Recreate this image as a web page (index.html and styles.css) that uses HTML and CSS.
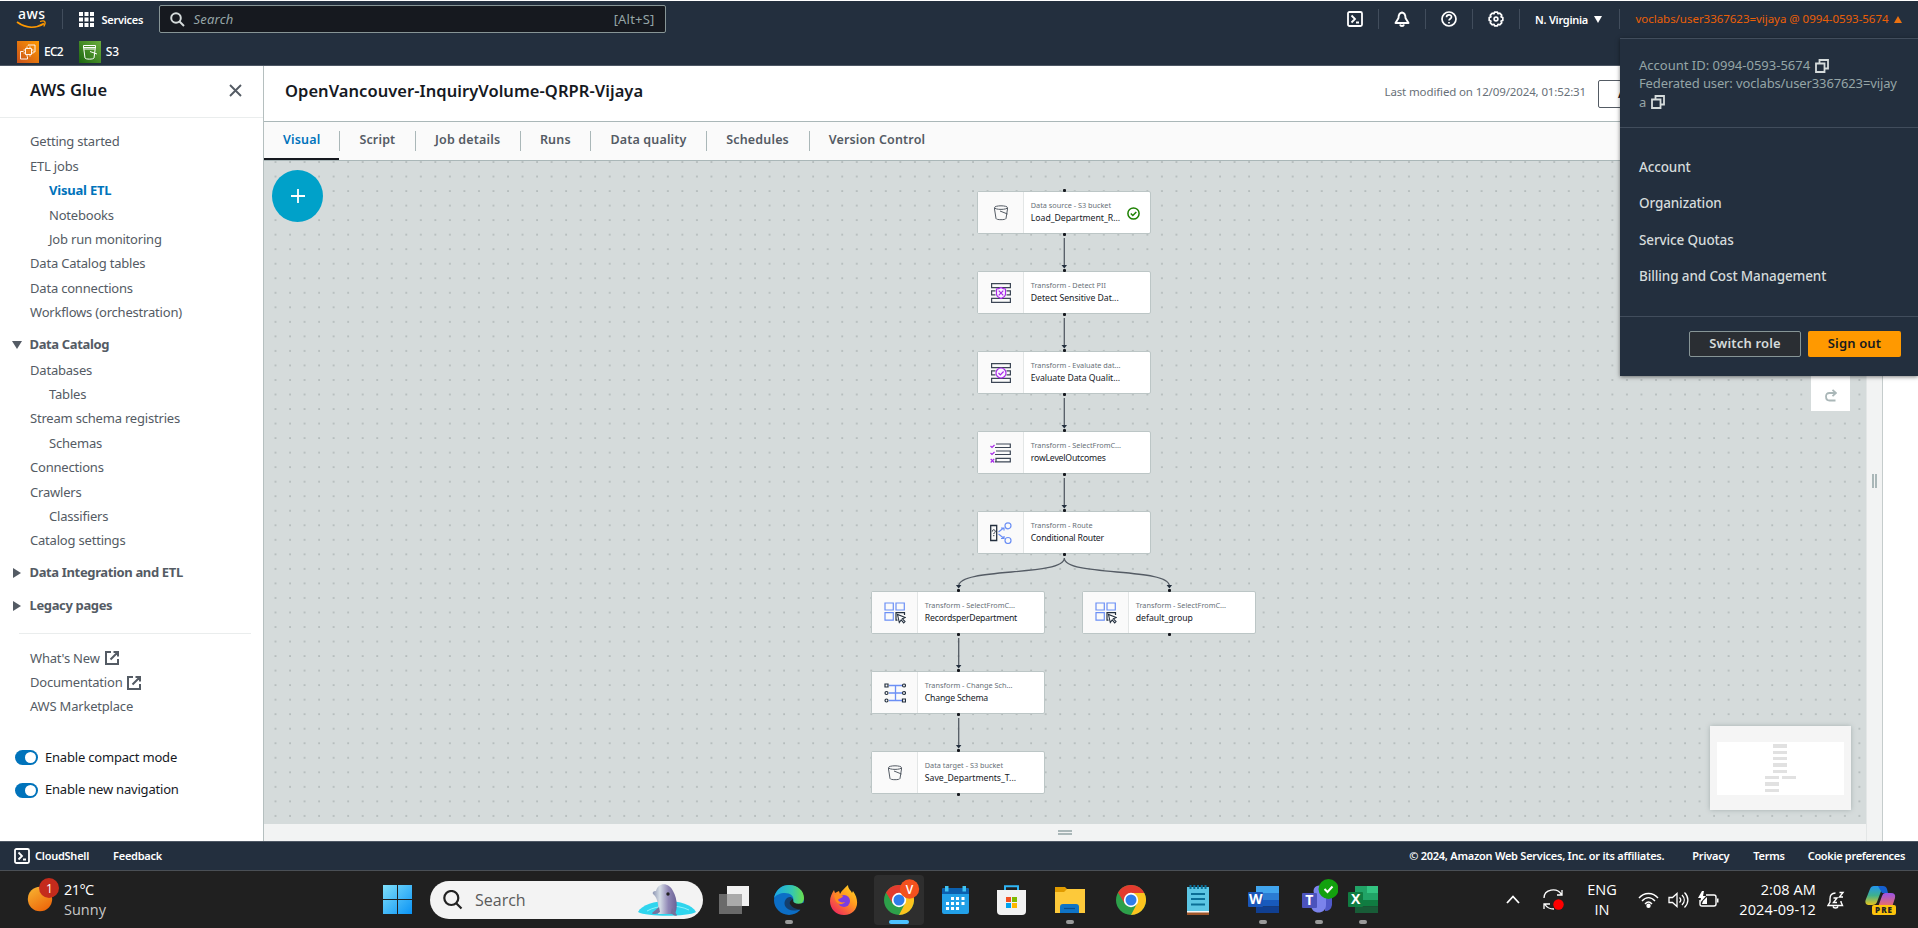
FILE: index.html
```html
<!DOCTYPE html>
<html lang="en">
<head>
<meta charset="utf-8">
<title>AWS Glue</title>
<link rel="stylesheet" href="styles.css">
</head>
<body>
<svg width="0" height="0" class="defs">
  <defs>
    <symbol id="external" viewBox="0 0 14 14"><path d="M6 1H1v12h12V8M8.500 1H13v4.500M13 1 5.500 8.500" fill="none" stroke="#545b64" stroke-width="2"/></symbol>
    <symbol id="copy" viewBox="0 0 14 14"><path d="M1 4.500h8.500V13H1zM4.500 4V1H13v8.500H10" fill="none" stroke="#d5dbdb" stroke-width="1.800"/></symbol>
    <symbol id="shell" viewBox="0 0 16 16"><rect x="1" y="1" width="14" height="14" rx="1.500" fill="none" stroke="#fff" stroke-width="1.800"/><path d="M4.500 4.500 8 8l-3.500 3.500M9 11.500h3" fill="none" stroke="#fff" stroke-width="1.800"/></symbol>
    <symbol id="chrome" viewBox="0 0 30 30"><circle cx="15" cy="15" r="15" fill="#2da04a"/><path d="M15 8h13.300A15 15 0 0 1 15 30l6-11.500z" fill="#fcc31e"/><path d="M2 7.500A15 15 0 0 1 28.300 8H15l-6.300 10.500z" fill="#e33b2e"/><circle cx="15" cy="15" r="7.200" fill="#fff"/><circle cx="15" cy="15" r="5.500" fill="#2f7de9"/></symbol>
    <symbol id="bucket" viewBox="0 0 16 16"><path d="M1.500 3v1l1.500 9.500c.3 1.600 9.700 1.600 10 0l1.500-9.500V3" fill="none" stroke="#545b64"/><ellipse cx="8" cy="2.600" rx="6.500" ry="1.800" fill="none" stroke="#545b64"/><path d="M7 6 14.500 9" fill="none" stroke="#545b64"/></symbol>
    <symbol id="select" viewBox="0 0 22 22"><path d="M1 1h8.300v7H1zM12 1h8.300v7H12zM1 10.700h8.300v7.500H1z" fill="none" stroke="#6b8ff5" stroke-width="1.200"/><path d="M20.500 13v-2.300H12v7.500h1.500" fill="none" stroke="#232f3e" stroke-width="1.200"/><path d="m13.500 12.500 1.800 8 1.900-2.600 2.500 3 1.300-1.300-2.600-2.800 2.900-1.300z" fill="#fff" stroke="#232f3e" stroke-width="1.100"/></symbol>
    <symbol id="rows" viewBox="0 0 20 20"><path d="M.6.600h18.800v4H.6zM.6 15.400h18.800v4H.6zM4.500 7.900H.6v4h3.900M15.500 7.900h3.900v4h-3.900" fill="none" stroke="#3d4756" stroke-width="1.200"/></symbol>
  </defs>
</svg>

<header class="top">
  <div class="bar">
    <svg class="logo" viewBox="0 0 30 20" width="30" height="20"><text x="1" y="9.500" class="logo-text" textLength="27">aws</text><path d="M0 13c9 6.500 19 6.500 27 1.500" fill="none" stroke="#f90" stroke-width="1.800"/><path d="M23 12.500c5-1.500 6.500 0 3.800 5" fill="none" stroke="#f90" stroke-width="1.300"/></svg>
    <i class="vsep s1"></i>
    <svg class="grid" width="15" height="15" viewBox="0 0 15 15" fill="#fff"><path d="M0 0h4v4H0zM5.500 0h4v4h-4zM11 0h4v4h-4zM0 5.500h4v4H0zM5.500 5.500h4v4h-4zM11 5.500h4v4h-4zM0 11h4v4H0zM5.500 11h4v4h-4zM11 11h4v4h-4z"/></svg>
    <b class="services">Services</b>
    <div class="search"><svg width="15" height="15" viewBox="0 0 15 15" fill="none" stroke="#d5dbdb" stroke-width="2"><circle cx="6" cy="6" r="4.800"/><path d="m9.500 9.500 4.500 4.500"/></svg><em>Search</em><span>[Alt+S]</span></div>
    <div class="tools">
      <svg width="16" height="16"><use href="#shell"/></svg><i class="vsep"></i>
      <svg width="16" height="16" viewBox="0 0 16 16" fill="none" stroke="#fff" stroke-width="1.900"><path d="M8 1.500C5 2 4.500 4.500 4.500 7L1.500 12h13l-3-5c0-2.500-.5-5-3.500-5.500z" stroke-linejoin="round"/><path d="M6 13.500c.5 2 3.500 2 4 0"/></svg><i class="vsep"></i>
      <svg width="16" height="16" viewBox="0 0 16 16" fill="none" stroke="#fff" stroke-width="1.700"><circle cx="8" cy="8" r="7"/><path d="M5.500 6.300C5.500 3 10.500 3.200 10.500 6c0 1.700-2.500 1.800-2.500 3.600M8 11v1.600"/></svg><i class="vsep"></i>
      <svg width="16" height="16" viewBox="0 0 16 16" fill="none" stroke="#fff"><path d="m6.500 1.200 3 0 .5 1.500 1.700-.5 2 2-.6 1.700 1.700.6v3l-1.700.6.6 1.700-2 2-1.700-.5-.5 1.500h-3L6 13.300l-1.700.5-2-2 .6-1.700-1.700-.6v-3l1.700-.6-.6-1.700 2-2 1.700.5z" stroke-width="1.700" stroke-linejoin="round"/><circle cx="8" cy="8" r="1.900" stroke-width="1.600"/></svg><i class="vsep"></i>
      <b class="region">N. Virginia</b><i class="tri down"></i><i class="vsep wide"></i>
      <span class="user">voclabs/user3367623=vijaya @ 0994-0593-5674</span><i class="tri up"></i>
    </div>
  </div>
  <div class="favs">
    <svg width="22" height="22" viewBox="0 0 22 22"><defs><linearGradient id="go" x1="0" y1="1" x2="1" y2="0"><stop stop-color="#c8511b"/><stop offset="1" stop-color="#f90"/></linearGradient><linearGradient id="gg" x1="0" y1="1" x2="1" y2="0"><stop stop-color="#1b660f"/><stop offset="1" stop-color="#6cae3e"/></linearGradient></defs><rect width="22" height="22" fill="url(#go)"/><path d="M8.500 7.500h6v6h-6zM10 5.500v2m3-2v2m-3 6v2m3-2v2M6.500 9h2m-2 3h2m6-3h2m-2 3h2M6.500 10.500h-3v7.500h7v-2.500M11 4.500V4h7v7h-2" fill="none" stroke="#fff" stroke-width=".9"/></svg><b class="ec2">EC2</b>
    <svg class="s3" width="22" height="22" viewBox="0 0 22 22"><rect width="22" height="22" fill="url(#gg)"/><path d="M4.500 5.500 6 17c.4 1.500 8.600 1.500 9 0l1.500-11.500M11 10.500l7 2.500M4.800 8h11" fill="none" stroke="#fff"/><path d="M4.500 4.500h12v2h-12z" fill="none" stroke="#fff"/></svg><b>S3</b>
  </div>
</header>

<div class="middle">
  <nav class="side">
    <div class="side-head"><b>AWS Glue</b><svg width="13" height="13" viewBox="0 0 13 13" stroke="#545b64" stroke-width="1.900"><path d="m1 1 11 11M12 1 1 12"/></svg></div>
    <ul class="g1">
      <li>Getting started</li><li>ETL jobs</li>
      <li class="sub on">Visual ETL</li><li class="sub">Notebooks</li><li class="sub">Job run monitoring</li>
      <li>Data Catalog tables</li><li>Data connections</li><li>Workflows (orchestration)</li>
    </ul>
    <div class="sec"><i class="tri down"></i><b>Data Catalog</b></div>
    <ul class="g2">
      <li>Databases</li><li class="sub">Tables</li><li>Stream schema registries</li><li class="sub">Schemas</li>
      <li>Connections</li><li>Crawlers</li><li class="sub">Classifiers</li><li>Catalog settings</li>
    </ul>
    <div class="sec"><i class="tri right"></i><b>Data Integration and ETL</b></div>
    <div class="sec"><i class="tri right"></i><b>Legacy pages</b></div>
    <hr>
    <ul class="g3">
      <li>What's New<svg width="14" height="14"><use href="#external"/></svg></li><li>Documentation<svg width="14" height="14"><use href="#external"/></svg></li><li>AWS Marketplace</li>
    </ul>
    <div class="toggle"><i></i><span>Enable compact mode</span></div>
    <div class="toggle"><i></i><span>Enable new navigation</span></div>
  </nav>

  <main class="main">
    <div class="title"><h1>OpenVancouver-InquiryVolume-QRPR-Vijaya</h1><span>Last modified on 12/09/2024, 01:52:31</span><div class="btn"><b>Actions</b></div></div>
    <div class="tabs">
      <div class="tab on"><b>Visual</b></div><div class="tab"><b>Script</b></div><div class="tab"><b>Job details</b></div><div class="tab"><b>Runs</b></div><div class="tab"><b>Data quality</b></div><div class="tab"><b>Schedules</b></div><div class="tab"><b>Version Control</b></div>
    </div>
    <div class="work">
      <div class="canvas-col">
        <div class="canvas">
          <svg class="edges" width="1602" height="663" viewBox="264 161 1602 663">
            <g fill="none" stroke="#545b64" stroke-width="1.300"><path d="M1064.300 238v29M1064.300 318v29M1064.300 398v29M1064.300 478v29M958.700 638v29M958.700 718v29M1064.300 558C1064.300 577 958.700 567 958.700 586M1064.300 558C1064.300 577 1169.400 567 1169.400 586"/></g>
            <g fill="#232f3e"><path id="ah" d="M1061.500 265h5.500l-2.700 3.500z"/><use href="#ah" y="80"/><use href="#ah" y="160"/><use href="#ah" y="240"/><use href="#ah" x="-105.600" y="320"/><use href="#ah" x="105.100" y="320"/><use href="#ah" x="-105.600" y="400"/><use href="#ah" x="-105.600" y="480"/></g>
          </svg>
          <div class="node n1"><div class="ic"><svg width="16" height="16"><use href="#bucket"/></svg></div><div class="tx"><small>Data source - S3 bucket</small><span>Load_Department_R...</span></div><svg class="ok" width="13" height="13" viewBox="0 0 13 13" fill="none" stroke="#1d8102" stroke-width="1.500"><circle cx="6.500" cy="6.500" r="5.600"/><path d="m3.800 6.500 2 2 3.500-3.600"/></svg></div>
          <div class="node n2"><div class="ic"><svg width="20" height="20"><use href="#rows"/><path d="M5.500 6c2 0 3-.5 4.500-1.500 1.500 1 2.500 1.500 4.500 1.500v5c0 2-2 3.500-4.500 4.500-2.500-1-4.500-2.500-4.500-4.500z" fill="#faf5ff" stroke="#a82be8" stroke-width="1.200"/><path d="m7.700 7.700 4.600 4.600m0-4.600-4.600 4.600" stroke="#a82be8" stroke-width="1.200"/></svg></div><div class="tx"><small>Transform - Detect PII</small><span>Detect Sensitive Dat...</span></div></div>
          <div class="node n3"><div class="ic"><svg width="20" height="20"><use href="#rows"/><circle cx="10" cy="10" r="5" fill="#faf5ff" stroke="#a82be8" stroke-width="1.200"/><path d="m7.500 10 1.800 1.800 3.300-3.300" fill="none" stroke="#a82be8" stroke-width="1.200"/></svg></div><div class="tx"><small>Transform - Evaluate dat...</small><span>Evaluate Data Qualit...</span></div></div>
          <div class="node n4"><div class="ic"><svg width="21" height="20" fill="none"><path d="M5 4.500h15.300V1H6M5 11.500h15.300V8H6M5 18.800h15.300v-3.500H6V19" stroke="#3d4756" stroke-width="1.200"/><path d="m.5 3 1.500 1.500L4.500 2M.5 10 2 11.500 4.500 9M.7 16l3.500 3.500m0-3.500L.7 19.500" stroke="#a82be8" stroke-width="1.200"/></svg></div><div class="tx"><small>Transform - SelectFromC...</small><span class="tight">rowLevelOutcomes</span></div></div>
          <div class="node n5"><div class="ic"><svg width="22" height="22" fill="none"><path d="M.7 3.500h6v15h-6z" stroke="#232f3e" stroke-width="1.300"/><path d="M2.300 9.500c0-2.500 3-2 3 0 0 1.200-1.500 1.200-1.500 2.500M3.800 13v1.200" stroke="#232f3e"/><path d="m8.500 10 5-4m-5 6 5 4m-2.500-10h3v2.500M11 16.500h3v-2.500" stroke="#6b8ff5" stroke-width="1.200"/><circle cx="18" cy="3.800" r="3" stroke="#6b8ff5" stroke-width="1.200"/><circle cx="18" cy="18.500" r="3" stroke="#6b8ff5" stroke-width="1.200"/></svg></div><div class="tx"><small>Transform - Route</small><span class="tight">Conditional Router</span></div></div>
          <div class="node n6"><div class="ic"><svg width="22" height="22"><use href="#select"/></svg></div><div class="tx"><small>Transform - SelectFromC...</small><span class="tight">RecordsperDepartment</span></div></div>
          <div class="node n7"><div class="ic"><svg width="22" height="22"><use href="#select"/></svg></div><div class="tx"><small>Transform - SelectFromC...</small><span>default_group</span></div></div>
          <div class="node n8"><div class="ic"><svg width="22" height="20" fill="none"><path d="M5 2.500h13M5 10h13M5 17.500h13M11.500 2.500v15" stroke="#6b8ff5" stroke-width="1.300"/><g stroke="#232f3e" stroke-width="1.200" fill="#fafafa"><path d="M1 1h3v3H1zM18.500 16h3v3h-3z"/><circle cx="20" cy="2.500" r="1.500"/><circle cx="2.500" cy="10" r="1.500"/><circle cx="20" cy="10" r="1.500"/><circle cx="2.500" cy="17.500" r="1.500"/></g></svg></div><div class="tx"><small>Transform - Change Sch...</small><span class="tight">Change Schema</span></div></div>
          <div class="node n9"><div class="ic"><svg width="16" height="16"><use href="#bucket"/></svg></div><div class="tx"><small>Data target - S3 bucket</small><span>Save_Departments_T...</span></div></div>
          <div class="plus"><svg width="14" height="14" stroke="#fff" stroke-width="1.800"><path d="M7 0v14M0 7h14"/></svg></div>
          <div class="redo"><svg width="12" height="13" viewBox="0 0 12 13" fill="none" stroke="#aab7b8" stroke-width="1.800"><path d="M11 4H4.500Q1 4 1 7.500 1 11.500 4.500 11.500H10.500M7.500.800 11 4 7.500 7.200"/></svg></div>
          <div class="map"><svg width="127" height="53"><rect width="127" height="53" fill="#fff"/><path fill="#e1e1e1" d="M56 2h14v4H56zM56 9h14v3H56zM56 15h14v3H56zM56 21h14v4H56zM56 28h14v3H56zM48 34h14v3H48zM65 34h14v3H65zM48 40h14v4H48zM48 47h14v3H48z"/></svg></div>
        </div>
        <div class="hstrip"><i></i></div>
      </div>
      <div class="vstrip"><i></i></div>
    </div>
  </main>
</div>

<footer class="foot">
  <svg width="16" height="16"><use href="#shell"/></svg><b class="cs">CloudShell</b><b class="fb">Feedback</b>
  <b class="legal">© 2024, Amazon Web Services, Inc. or its affiliates.</b><b class="pr">Privacy</b><b class="te">Terms</b><b class="ck">Cookie preferences</b>
</footer>

<aside class="account">
  <div class="acc-info"><div><span>Account ID: 0994-0593-5674</span><svg width="14" height="14"><use href="#copy"/></svg></div><div><span class="fed">Federated user: voclabs/user3367623=vijay</span></div><div><span>a</span><svg width="14" height="14"><use href="#copy"/></svg></div></div>
  <div class="acc-links"><b>Account</b><b>Organization</b><b>Service Quotas</b><b>Billing and Cost Management</b></div>
  <div class="acc-btns"><div class="sw"><b>Switch role</b></div><div class="so"><b>Sign out</b></div></div>
</aside>

<div class="task">
  <div class="weather"><svg width="38" height="38" viewBox="0 0 38 38"><defs><linearGradient id="sun" x2="0.600" y2="1"><stop stop-color="#f7b733"/><stop offset="1" stop-color="#ee6a0c"/></linearGradient></defs><circle cx="14" cy="22" r="12.200" fill="url(#sun)"/><circle cx="23" cy="11" r="10" fill="#c42b1c"/><text x="20" y="15.500" class="badge">1</text></svg><div><span>21°C</span><small>Sunny</small></div></div>
  <div class="slot win"><svg width="29" height="29"><defs><linearGradient id="w" x2="1" y2="1"><stop stop-color="#7fe0fb"/><stop offset="1" stop-color="#0a93f5"/></linearGradient></defs><path d="M0 0h14v14H0zM15 0h14v14H15zM0 15h14v14H0zM15 15h14v14H15z" fill="url(#w)"/></svg></div>
  <div class="pill"><svg width="20" height="20" viewBox="0 0 20 20" fill="none" stroke="#222" stroke-width="2.200"><circle cx="8.300" cy="8" r="7"/><path d="m13 13 5.500 5.500"/></svg><span>Search</span>
    <svg class="dolphin" width="60" height="34" viewBox="0 0 60 34"><defs><linearGradient id="dol"><stop stop-color="#8f97b3"/><stop offset=".3" stop-color="#d5dde6"/><stop offset=".65" stop-color="#8f86b5"/><stop offset="1" stop-color="#6b6395"/></linearGradient></defs><path d="M1 29C9 15 50 14 59 29 50 34 10 34 1 29z" fill="#2fd5ee"/><path d="M10 28c10-6 30-7 42-1" fill="none" stroke="#8ff2fb"/><path d="M21 31C22 24 21 15 16 11c-1-2 1-3 3-3 2-9 13-9 17 0 4 7 5 16 2 23z" fill="url(#dol)"/><path d="m22 24-7 6c0 2 6 1 8-1zM35 25l5 7c-1 2-4 0-6-2z" fill="#77719c"/><circle cx="31" cy="11" r="1.700" fill="#222"/></svg></div>
  <div class="slot tv"><svg width="30" height="28"><path d="M0 8h8v12h15v8H0z" fill="#6a6a6a"/><path d="M8 0h22v20H8z" fill="#f1f1f1"/><path d="M8 8h15v12H8z" fill="#aaa"/></svg></div>
  <div class="slot run"><svg width="30" height="30" viewBox="0 0 30 30"><defs><linearGradient id="ed" x1="0" x2="1"><stop stop-color="#1aa7e8"/><stop offset=".6" stop-color="#35c7b0"/><stop offset="1" stop-color="#6be04b"/></linearGradient></defs><circle cx="15" cy="15" r="15" fill="#0c6ec6"/><path d="M0 13C2 4 8 0 15 0c9 0 15 6 15 13 0 5-4 7-8 7-3 0-4-1-3-3 2-6-3-9-8-9C6 8 2 10 0 13z" fill="url(#ed)"/><path d="M12 14c-5 7 3 15 15 10l2-2c-1-2-7 0-9-2-2-1 0-3-1-6-2-3-5-2-7 0z" fill="#143f6e"/><path d="M31 17v6l-4 2c-4-1-9-2-11-6-1-2 1-4 3-5-1 5 6 6 12 3z" fill="#202020"/></svg></div>
  <div class="slot ff"><svg width="28" height="30" viewBox="0 0 28 30"><defs><linearGradient id="fo" x1="1" x2="0.200" y2="1"><stop stop-color="#ffe226"/><stop offset=".45" stop-color="#ff9a1f"/><stop offset="1" stop-color="#f0245e"/></linearGradient></defs><path d="M14 30C6 30 0 24 0 16 0 12 2 8 4 5l1 3 4-2 1 3c2-4 5-6 8-9 0 4 3 5 4 8l1-2c8 11 4 24-9 24z" fill="url(#fo)"/><circle cx="14" cy="16" r="6" fill="#7a3de0"/><path d="M4 10c4-2 6 0 9 1-1 3-5 2-5 4 1 2 4 3 7 2-3 4-9 2-10-3z" fill="#ff8b1e"/></svg></div>
  <div class="slot hot"><svg width="44" height="40" viewBox="0 0 44 40"><use href="#chrome" x="7" y="8" width="30" height="30"/><circle cx="32.500" cy="12" r="9.700" fill="#f4511e"/><text x="28.700" y="16.500" class="badge v">V</text></svg></div>
  <div class="slot cal"><svg width="27" height="28"><rect y="2" width="27" height="26" rx="2" fill="#22a0e8"/><path d="M2 2h23q2 0 2 2v4H0V4q0-2 2-2z" fill="#0b5fae"/><path d="M3 0h3.500v5.500H3zM20.500 0H24v5.500h-3.500z" fill="#3fc3f3"/><path d="M9 11h3v3H9zM14 11h3v3h-3zM19.500 11h3v3h-3zM4 16h3v3H4zM9 16h3v3H9zM14 16h3v3h-3zM19.500 16h3v3h-3zM4 21h3v3H4zM9 21h3v3H9zM14 21h3v3h-3z" fill="#fff"/></svg></div>
  <div class="slot store"><svg width="29" height="30"><path d="M8 6V1.200h13V6" fill="none" stroke="#2fb5f5" stroke-width="2"/><path d="M0 5h29v21q0 4-4 4H4q-4 0-4-4z" fill="#f2f2f2"/><path d="M9 12h5v5H9z" fill="#f25022"/><path d="M15 12h5v5h-5z" fill="#7fba00"/><path d="M9 18h5v5H9z" fill="#00a4ef"/><path d="M15 18h5v5h-5z" fill="#ffb900"/></svg></div>
  <div class="slot folder run"><svg width="30" height="27"><path d="M0 1h10l3 3-3 4H0z" fill="#e09b00"/><path d="M0 6h9l3-3h18v24H0z" fill="#fdc93a"/><path d="M5 27v-6q0-3 3-3h13q3 0 3 3v6z" fill="#0f74c6"/><path d="M9 22.500h11" stroke="#0a4d8c" stroke-width="1.200"/></svg></div>
  <div class="slot ch2"><svg width="30" height="30"><use href="#chrome"/></svg></div>
  <div class="slot note"><svg width="22" height="30"><path d="M0 25h22v5H0z" fill="#a0562a"/><path d="M0 24h22v3.500H0z" fill="#f5f5f5"/><path d="M0 2h22v24H0z" fill="#5cc6e4"/><path d="M4 9h14M4 14h14M4 19.500h14" stroke="#0b6e96" stroke-width="1.800"/><path d="M3.500 0v4M7.300 0v4M11 0v4M14.800 0v4M18.500 0v4" stroke="#0b6e96" stroke-width="2"/></svg></div>
  <div class="slot word run"><svg width="31" height="27"><path d="M8 0h23v7H8z" fill="#41a5ee"/><path d="M8 7h23v7H8z" fill="#2b7cd3"/><path d="M8 14h23v6.500H8z" fill="#185abd"/><path d="M8 20.500h23V27H8z" fill="#103f91"/><rect y="6" width="15" height="15" rx="1" fill="#1a56b8"/><text x="1" y="18.200" class="app" textLength="13">W</text></svg></div>
  <div class="slot teams run"><svg width="38" height="38" viewBox="0 0 38 38"><circle cx="19" cy="13" r="5.500" fill="#7b83eb"/><path d="M24 18h8v9q-1 6-7 6z" fill="#5059c9"/><path d="M11 17h15v10c0 10-15 10-15 0z" fill="#7b83eb"/><rect x="2" y="15" width="15" height="15" rx="1" fill="#4b53bc"/><text x="5.200" y="27" class="app">T</text><circle cx="28.500" cy="11" r="10" fill="#13a10e"/><path d="m24.500 11 3 3 5-5.500" fill="none" stroke="#fff" stroke-width="2"/></svg></div>
  <div class="slot excel run"><svg width="30" height="27"><path d="M7 0h12v7H7zM7 7h12v7H7z" fill="#21a366"/><path d="M19 0h11v7H19z" fill="#33c481"/><path d="M19 7h11v7H19z" fill="#21a366"/><path d="M7 14h23v6.500H7z" fill="#107c41"/><path d="M7 20.500h23V27H7z" fill="#185c37"/><rect y="6" width="15" height="15" rx="1" fill="#107c41"/><text x="3" y="18.200" class="app">X</text></svg></div>
  <div class="tray">
    <svg width="14" height="9" fill="none" stroke="#fff" stroke-width="1.800"><path d="m1 8 6-6.500L13 8"/></svg>
    <svg class="sync" width="21" height="21" viewBox="0 0 21 21" fill="none" stroke="#fff" stroke-width="1.300"><path d="M1 9C1 0 14-2 18.500 5.500M19 1v5h-5M11 20c-4 0-7-1-9-4.500M1 20v-5h6"/><circle cx="15.500" cy="15.500" r="5.200" fill="#f00" stroke="none"/></svg>
    <div class="lang"><span>ENG</span><span>IN</span></div>
    <svg class="wifi" width="21" height="16" viewBox="0 0 21 16" fill="none" stroke="#fff" stroke-width="1.400"><path d="M1 6c5-6 14-6 19 0M4 9c4-4.500 9-4.500 13 0M7 12c2.500-2.700 4.500-2.700 7 0"/><circle cx="10.500" cy="13.700" r="1.500" fill="#fff"/></svg>
    <svg class="vol" width="21" height="18" viewBox="0 0 21 18" fill="none" stroke="#fff" stroke-width="1.300"><path d="M1 6.500h3.500L9 2.500v13l-4.500-4H1zM11.500 6.500c1.500 1.500 1.500 3.500 0 5M14 4c3 3 3 7 0 10M16.500 1.500c4.500 4.500 4.500 10.500 0 15"/></svg>
    <svg class="bat" width="21" height="17" viewBox="0 0 21 17"><path d="M8 4h8q2 0 2 2v7q0 2-2 2H4q-2 0-2-2V9" fill="none" stroke="#fff" stroke-width="1.400"/><path d="M19 7.500h1.500v4H19zM4 0 0 7h3l-1 5 6-7H5l1-5zM4 13l1-3 4-4v7z" fill="#fff"/></svg>
    <div class="clock"><span>2:08 AM</span><span>2024-09-12</span></div>
    <svg class="bell" width="18" height="18" viewBox="0 0 18 18" fill="none" stroke="#fff" stroke-width="1.400"><path d="M8.500 2C4 2 3 5 3 8v3l-2 3.500h14.500L14 11v-1M6 15.500c.5 2 4.500 2 5 0M6.500 7H10l-3.500 4.500H10M12.500 1.500H16l-3.500 4.500H16"/></svg>
    <svg class="cop" width="31" height="30" viewBox="0 0 31 30"><defs><linearGradient id="c1" x2="0" y2="1"><stop stop-color="#2297f0"/><stop offset=".5" stop-color="#3fb08c"/><stop offset="1" stop-color="#e8c51c"/></linearGradient><linearGradient id="c2" x2="0" y2="1"><stop stop-color="#9a53e8"/><stop offset="1" stop-color="#f2705a"/></linearGradient></defs><path d="M9 1h9l-6 16q-1 3-5 3H3q-4-1-2-6L5 4q1-3 4-3z" fill="url(#c1)"/><path d="M13 1h5q3 0 4 3l1 4h-6z" fill="#1560d0"/><path d="M20 8h6q5 0 4 5l-3 9H13l4-11q1-3 3-3z" fill="url(#c2)"/><rect x="7" y="20" width="24" height="10" rx="2" fill="#fdc30b"/><text x="10" y="28" class="pre" textLength="17">PRE</text></svg>
  </div>
</div>
</body>
</html>
```
FILE: styles.css
```css
* { box-sizing: border-box; }
body { margin: 0; width: 1918px; height: 928px; overflow: hidden; position: relative; display: flex; flex-direction: column; background: #fff; font-family: "Noto Sans", "Open Sans", sans-serif; font-size: 13px; color: #16191f; }
.defs { position: absolute; }
svg { flex: none; display: block; }
b { font-weight: 600; }
span, b, em, small, h1 { white-space: pre; }
.tri { width: 0; height: 0; flex: none; }

/* Top navigation */
.top { height: 66px; border-top: 1px solid #fff; border-bottom: 1px solid #4d5764; background: #232f3e; color: #fff; flex: none; }
.bar { height: 37px; display: flex; align-items: center; padding: 0 0 1px 17px; font-size: 11px; }
.logo { overflow: visible; }
.logo-text { font: 500 14px "Noto Sans", sans-serif; fill: #fff; }
.vsep { width: 1px; height: 20px; background: #414d5c; flex: none; }
.s1 { margin: 0 16px 0 15px; }
.services { margin-left: 7.500px; letter-spacing: -.28px; }
.search { margin-left: 15.500px; width: 507px; height: 28px; border: 1px solid #879596; border-radius: 2px; background: #16191f; display: flex; align-items: center; padding: 0 10px; color: #95a5a6; font-size: 13px; letter-spacing: .2px; }
.search em { margin-left: 9px; padding-bottom: 1px; }
.search span { margin-left: auto; }
.tools { margin-left: auto; display: flex; align-items: center; padding-right: 16px; }
.tools .vsep { margin: 0 15px; }
.tools .wide { margin: 0 16px 0 17px; }
.tools .tri { margin-left: 5.500px; border-left: 4px solid transparent; border-right: 4px solid transparent; }
.tools .down { border-top: 7px solid #fff; }
.tools .up { border-bottom: 7px solid #ec7211; }
.region { letter-spacing: -.27px; }
.user { color: #eb5f07; font-size: 11.500px; letter-spacing: -.03px; padding-bottom: 1px; }
.favs { display: flex; align-items: center; padding: 3px 0 0 17px; font-size: 12px; }
.favs b { margin: 0 0 1px 5px; font-weight: 500; letter-spacing: -.2px; }
.favs .ec2 { letter-spacing: -.8px; }
.favs .s3 { margin-left: 16px; }

/* Side navigation */
.middle { flex: 1; min-height: 0; display: flex; }
.side { width: 264px; flex: none; border-right: 1px solid #b5bfbf; color: #545b64; letter-spacing: -.2px; }
.side-head { height: 52px; border-bottom: 1px solid #eaeded; display: flex; justify-content: space-between; align-items: center; padding: 0 21px 3px 30px; font-size: 16.500px; letter-spacing: .1px; color: #16191f; }
.side-head b { padding-bottom: 2px; }
.side ul { list-style: none; margin: 0; padding: 0 0 0 30px; }
.side li { display: flex; align-items: center; height: 24.400px; padding-bottom: 1.500px; }
.side li svg { margin: 1px 0 0 5px; }
.side .sub { padding-left: 19px; }
.on { color: #0073bb; font-weight: 700; }
.side .g1 { padding-top: 12px; }
.sec { height: 33px; display: flex; align-items: center; padding: 6px 0 0 12px; }
.sec b { font-weight: 700; margin-left: 7.500px; padding-bottom: 2px; letter-spacing: -.36px; }
.sec .down { border-left: 5px solid transparent; border-right: 5px solid transparent; border-top: 8px solid #545b64; }
.sec .right { margin: 0 1px; border-top: 5px solid transparent; border-bottom: 5px solid transparent; border-left: 8px solid #545b64; }
.side hr { margin: 14px 12px 12px 19px; border: 0; border-top: 1px solid #eaeded; }
.side .g3 { margin-bottom: 22px; }
.toggle { height: 32.500px; display: flex; align-items: center; color: #16191f; padding-left: 15px; }
.toggle span { padding-bottom: 2px; }
.toggle i { width: 23px; height: 15px; border-radius: 8px; background: #0073bb; display: flex; justify-content: flex-end; padding: 2px; margin-right: 7px; }
.toggle i::after { content: ""; width: 11px; height: 11px; border-radius: 6px; background: #fff; }

/* Job editor */
.main { flex: 1; min-width: 0; display: flex; flex-direction: column; }
.title { height: 55px; flex: none; display: flex; align-items: center; padding-left: 21px; }
.title h1 { margin: 0; padding-bottom: 6px; font-size: 16.500px; font-weight: 600; letter-spacing: .05px; }
.title span { margin-left: auto; padding-bottom: 4px; font-size: 11.500px; letter-spacing: -.13px; color: #687078; }
.btn { width: 320px; height: 28px; margin-left: 12px; border: 1px solid #545b64; border-radius: 2px; padding: 3px 19px; }
.tabs { height: 40px; flex: none; display: flex; background: #fafafa; border-top: 1px solid #aab7b8; border-bottom: 1px solid #aab7b8; color: #545b64; }
.tab { display: flex; align-items: center; padding: 0 19.700px 3px 20px; position: relative; font-size: 12.500px; letter-spacing: .16px; }
.tab + .tab::before { content: ""; position: absolute; left: 0; top: 9px; height: 20px; border-left: 1px solid #aab7b8; }
.tab.on { color: #0073bb; padding: 0 19px 3px; box-shadow: inset 0 -2px #16191f; }
.work { flex: 1; display: flex; min-height: 0; }
.canvas-col { width: 1602px; display: flex; flex-direction: column; }
.canvas { flex: 1; position: relative; overflow: hidden; background: #d5dbdb radial-gradient(circle at 1px 1px, #b0b8b8 0.600px, transparent 1px) 10.500px 0 / 14.537px 14.537px; }
.hstrip { height: 17px; background: #f2f3f3; display: flex; justify-content: center; align-items: center; }
.hstrip i { width: 14px; height: 5px; border: solid #aab7b8; border-width: 2px 0; }
.vstrip { width: 17px; background: #f2f3f3; border-left: 1px solid #e3e6e6; border-right: 1px solid #c5cccc; display: flex; justify-content: center; padding-top: 313px; }
.vstrip i { width: 5px; height: 14px; border: solid #aab7b8; border-width: 0 2px; }
.edges { position: absolute; left: 0; top: 0; }
.node { position: absolute; width: 174px; height: 43px; background: #fff; border: 1px solid #bcc6c6; border-radius: 2px; display: flex; }
.node::before, .node::after { content: ""; position: absolute; left: 85px; width: 3px; height: 3px; border-radius: 1px; background: #16191f; }
.node::before { top: -3px; }
.node::after { bottom: -3px; }
.ic { width: 46px; background: #fafafa; border-right: 1px solid #e3e6e6; display: flex; align-items: center; justify-content: center; }
.tx { padding: 7px 0 0 6.500px; display: flex; flex-direction: column; }
.tx small { font-size: 7.300px; line-height: 13px; color: #687078; }
.tx span { font-size: 8.700px; line-height: 12px; letter-spacing: -.03px; }
.tx .tight { letter-spacing: -.2px; }
.ok { position: absolute; right: 10px; top: 14.500px; }
.n1, .n2, .n3, .n4, .n5 { left: 713.300px; }
.n6, .n8, .n9 { left: 607.300px; }
.n7 { left: 818.300px; }
.n1 { top: 30px; }
.n2 { top: 110px; }
.n3 { top: 190px; }
.n4 { top: 270px; }
.n5 { top: 350px; }
.n6, .n7 { top: 430px; }
.n8 { top: 510px; }
.n9 { top: 590px; }
.plus { position: absolute; left: 8px; top: 9px; width: 51px; height: 52px; border-radius: 50%; background: #00a1c9; display: flex; align-items: center; justify-content: center; }
.redo { position: absolute; left: 1547px; top: 200px; width: 39px; height: 50px; background: #fff; display: flex; align-items: flex-end; justify-content: center; padding-bottom: 9px; }
.map { position: absolute; left: 1446px; top: 565px; width: 141px; height: 84px; background: #f5f5f5; box-shadow: 0 0 5px #a5b0b0; padding: 16px 7px; }

/* Console footer */
.foot { height: 30px; flex: none; background: #232f3e; border-top: 1px solid #4d5764; border-bottom: 1px solid #4a4f55; color: #fff; display: flex; align-items: center; font-size: 11px; letter-spacing: -.25px; padding: 0 13px 1px 14px; }
.foot b { padding-bottom: 1px; }
.cs { margin-left: 5px; }
.fb { margin-left: 24px; }
.legal { margin-left: auto; }
.pr { margin-left: 28px; }
.te { margin-left: 24px; }
.ck { margin-left: 23px; letter-spacing: -.33px; }

/* Account menu */
.account { position: absolute; left: 1620px; top: 38px; width: 298px; height: 338px; background: #232f3e; border-top: 1px solid #414d5c; box-shadow: 0 1px 4px rgba(0, 0, 0, .5); color: #d5dbdb; }
.acc-info { height: 89px; padding: 17px 0 0 19px; border-bottom: 1px solid #414d5c; color: #95a5a6; line-height: 18px; }
.acc-info div { height: 18.300px; display: flex; align-items: center; }
.acc-info svg { margin: 1px 0 0 5px; }
.fed { letter-spacing: -.13px; }
.acc-links { height: 189px; border-bottom: 1px solid #414d5c; padding: 21px 0 0 19px; display: flex; flex-direction: column; font-size: 13.500px; letter-spacing: -.12px; }
.acc-links b { line-height: 36.400px; font-weight: 500; }
.acc-btns { display: flex; justify-content: flex-end; gap: 7px; padding: 14px 17px 0 0; letter-spacing: .15px; }
.acc-btns div { height: 26px; border-radius: 2px; display: flex; align-items: center; justify-content: center; padding-bottom: 2px; }
.sw { width: 112px; border: 1px solid #879596; background: #2a2e33; }
.so { width: 93px; background: #f90; color: #16191f; }

/* Desktop taskbar */
.task { height: 57px; flex: none; background: #202020; display: flex; align-items: center; color: #fff; font-family: "Open Sans", sans-serif; font-size: 14.500px; }
.weather { width: 375.500px; flex: none; display: flex; padding-left: 26px; align-items: center; }
.weather > svg { margin-top: -8px; }
.weather div { display: flex; flex-direction: column; line-height: 20px; }
.weather span { letter-spacing: -.6px; }
.weather small { font-size: 14.500px; color: #c8c8c8; }
.badge { font: 12px "Open Sans", sans-serif; fill: #fff; }
.v { font-weight: 600; }
.app { font: 700 14px "Open Sans", sans-serif; fill: #fff; }
.pre { font: 800 8px "Open Sans", sans-serif; fill: #222; }
.slot { width: 44px; height: 50px; flex: none; position: relative; display: flex; align-items: center; justify-content: center; border-radius: 4px; }
.run::after, .hot::after { content: ""; position: absolute; bottom: 1px; left: calc(50% - 4px); width: 8px; height: 4px; border-radius: 2px; background: #9a9a9a; }
.hot { width: 50px; margin-left: 8px; background: #2e2e2e; }
.hot svg { margin-bottom: 6px; }
.hot::after { width: 20px; left: 15px; background: #4cc2ff; }
.pill { width: 273px; height: 38px; flex: none; border-radius: 19px; background: #f3f3f3; margin: 0 9px 0 10.500px; display: flex; align-items: center; padding: 0 6px 0 13px; color: #5a5a5a; font-size: 16px; }
.pill span { margin-left: 12px; }
.dolphin { margin-left: auto; }
.tv + .run, .ff { margin-left: 11px; }
.cal { margin-left: 9px; }
.store { margin-left: 12.500px; }
.folder { margin-left: 14.500px; }
.ch2 { margin-left: 17px; }
.note { margin-left: 23px; }
.word { margin-left: 21px; }
.teams { margin-left: 12px; }
.teams svg { margin-bottom: 6px; }
.tray { margin-left: auto; display: flex; align-items: center; padding-right: 22px; }
.sync { margin-left: 23px; }
.lang { margin-left: 22px; width: 32px; display: flex; flex-direction: column; align-items: center; line-height: 20px; }
.wifi { margin-left: 20px; }
.vol { margin-left: 9px; }
.bat { margin-left: 9px; }
.clock { width: 97px; display: flex; flex-direction: column; align-items: flex-end; line-height: 20px; letter-spacing: .1px; }
.bell { margin-left: 11px; }
.cop { margin-left: 20px; }
```
